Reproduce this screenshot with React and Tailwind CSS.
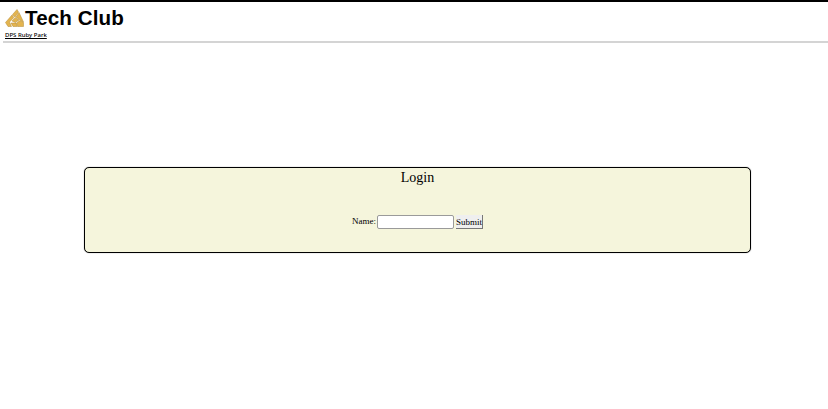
import React from 'react';

const Logo = () => (
  <svg width="19" height="18" viewBox="0 0 19 18" className="shrink-0">
    <g fill="#e3b44f" stroke="#b58a34" strokeWidth="0.5" strokeLinejoin="round">
      <path d="M0.5 13.5 L7 6 L9 8.5 L4.5 13 L6.5 17.5 L3 17.5 Z" />
      <path d="M7.5 5.5 L12 0.5 L13.5 3 L10 8 Z" />
      <path d="M7 12 L10.5 8.5 L14 11 L10.5 13.5 Z" />
      <path d="M11 8 L14 3.5 L18.5 13 L15 11 Z" />
      <path d="M6 14 L11 14 L12.5 17.5 L8 17.5 Z" />
      <path d="M11.5 14 L15 11.5 L18.5 13.5 L18.5 17.5 L13 17.5 Z" />
    </g>
  </svg>
);

const App = () => {
  return (
    <div className="min-h-[409px] bg-white border-t-2 border-black font-['Liberation_Serif',serif] text-black">
      <header className="ml-[3px] h-[41px] border-b-2 border-[#d4d4d4] px-[2px]">
        <div className="flex items-center h-[25px] pt-[6px]">
          <Logo />
          <h1 className="ml-[1px] font-['Liberation_Sans',sans-serif] font-bold text-[20.6px] leading-[24px] tracking-[0.1px]">Tech Club</h1>
        </div>
        <a href="#" className="block mt-[3px] font-['Noto_Sans',sans-serif] text-[6px] leading-[10px] font-medium underline">DPS Ruby Park</a>
      </header>

      <main className="flex justify-center pt-[124px]">
        <div className="w-[667px] h-[86px] ml-[7px] bg-[#f5f5dc] border border-black rounded-[5px] shadow-[0_0_1px_#666] text-center">
          <h2 className="text-[14px] leading-[20px]">Login</h2>
          <form className="flex items-center justify-center mt-[27px] text-[9px]">
            <label htmlFor="name" className="mr-[1px]">Name:</label>
            <input id="name" type="text" className="w-[75px] h-[12px] box-content bg-white border-[0.5px] border-[#9a9a9a] rounded-[2px] mr-[1px]" />
            <button type="button" className="w-[27px] h-[14px] ml-[1px] bg-[#efefef] border-r border-b border-[#777] text-[9px] leading-[12px]">Submit</button>
          </form>
        </div>
      </main>
    </div>
  );
};

export default App;
